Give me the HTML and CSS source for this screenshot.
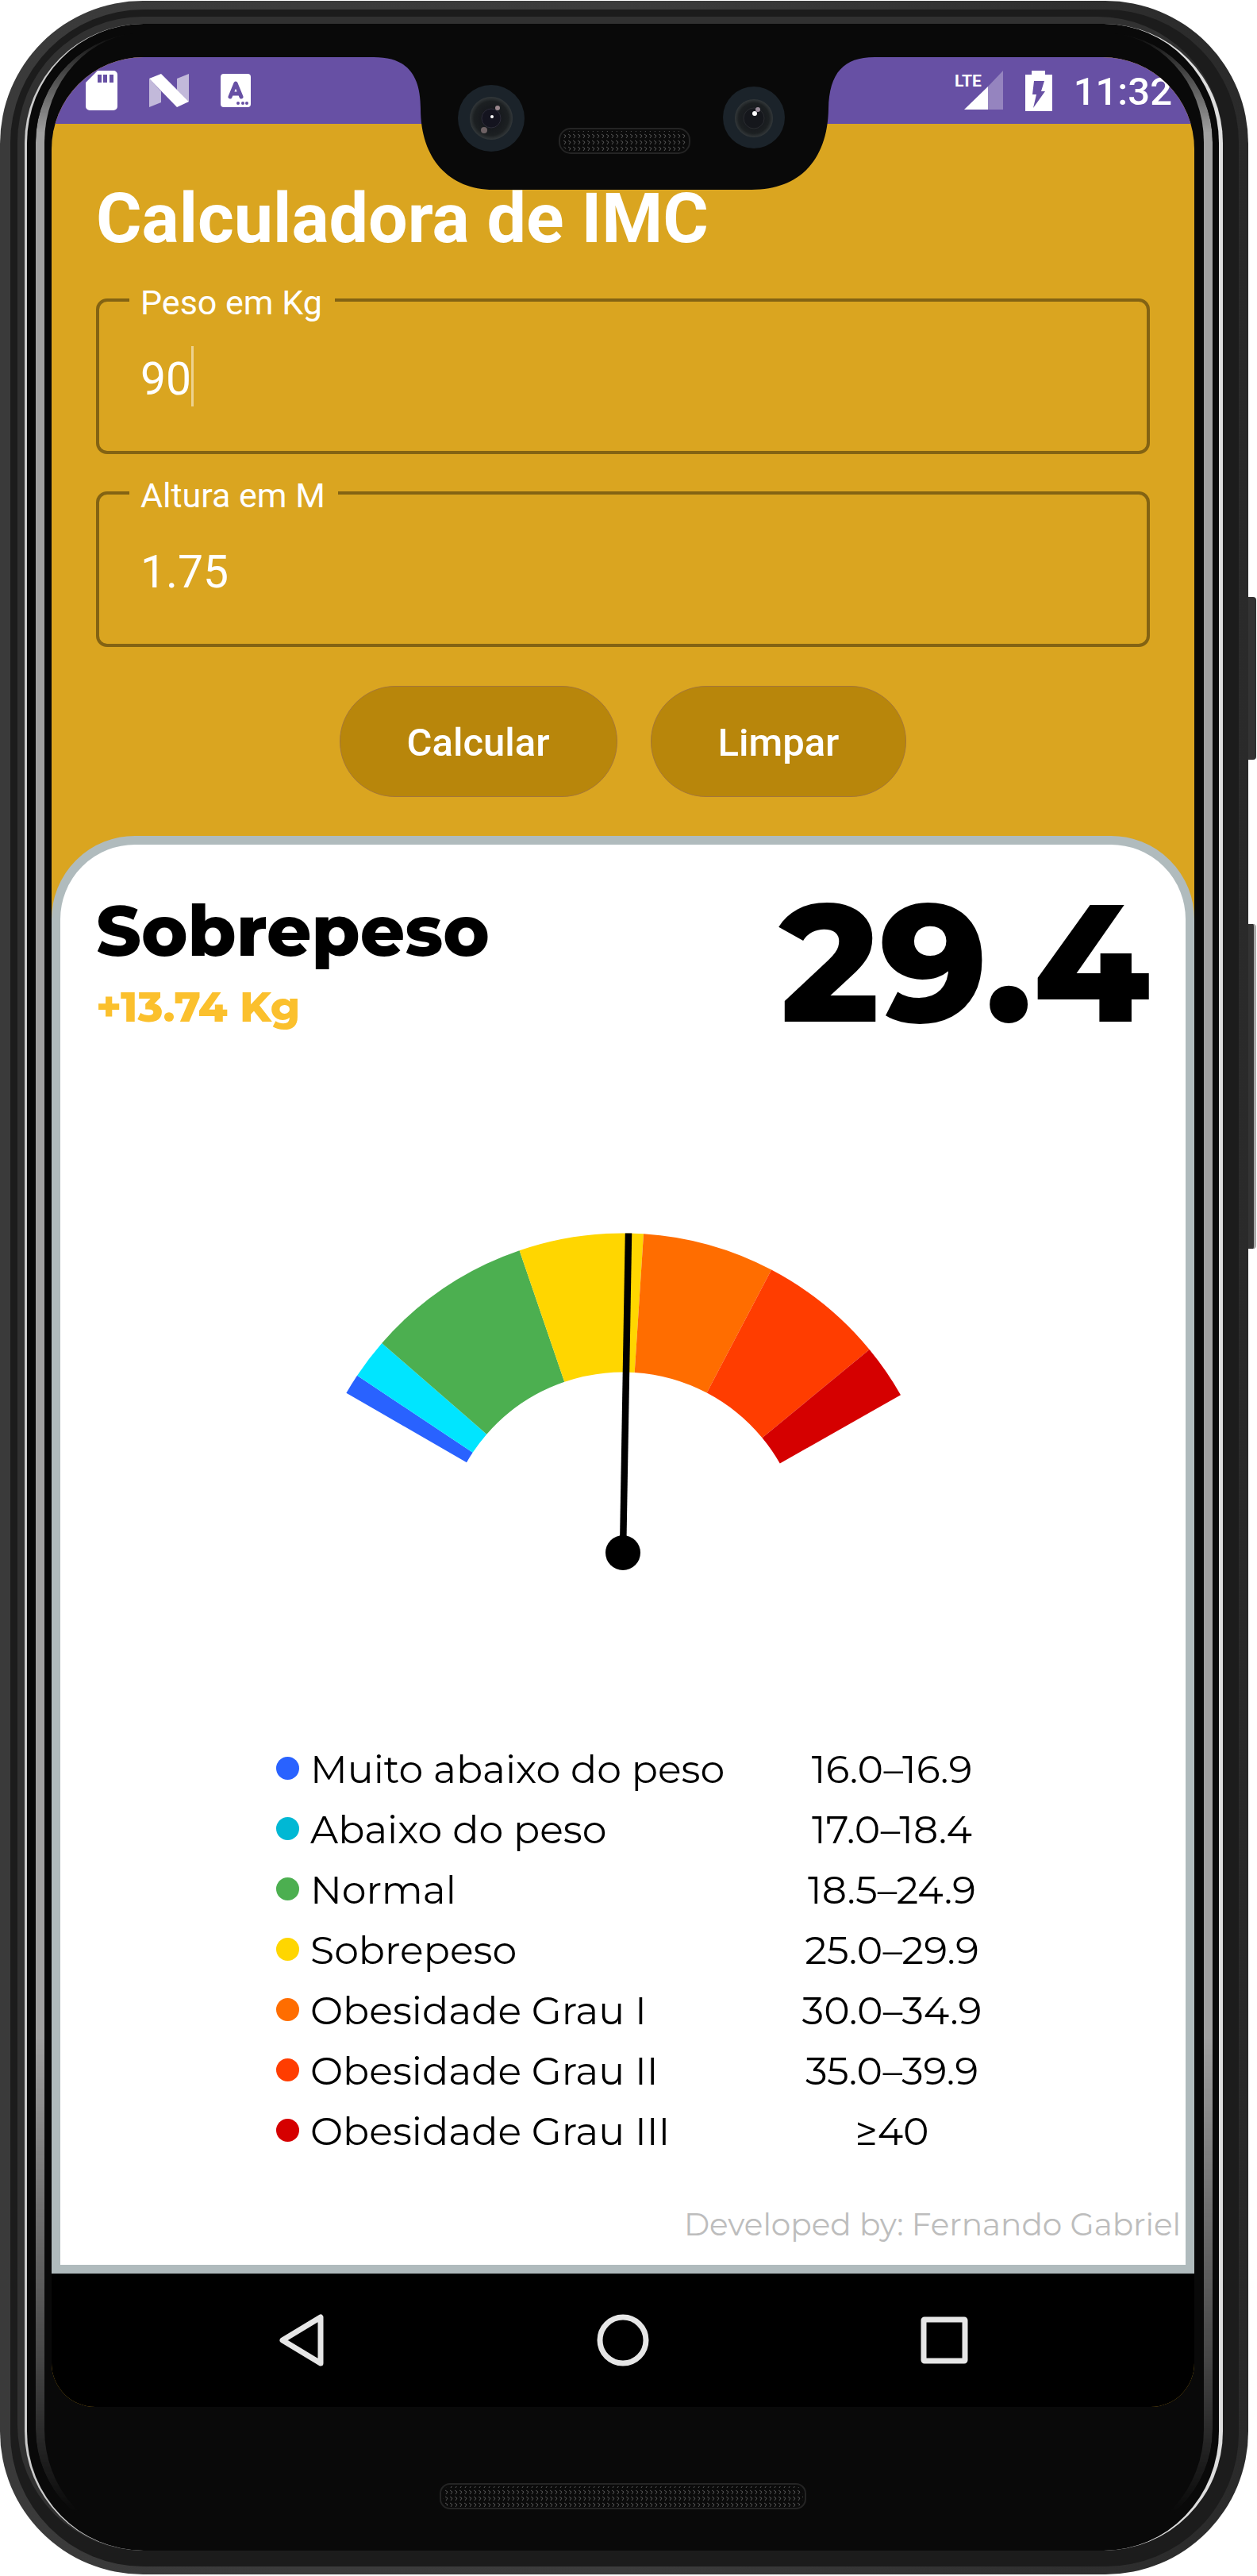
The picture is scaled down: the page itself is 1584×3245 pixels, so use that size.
FILE: index.html
```html
<!DOCTYPE html>
<html lang="pt-BR">
<head>
<meta charset="utf-8">
<meta name="viewport" content="width=device-width, initial-scale=1">
<title>Calculadora de IMC</title>
<link rel="stylesheet" href="styles.css">
</head>
<body>
<div class="stage">
  <div class="side-key side-key-power"></div>
  <div class="side-key side-key-volume"></div>
  <div class="phone">
    <div class="rim rim-dark"></div>
    <div class="rim rim-inner"></div>
    <div class="rim rim-glass"></div>
    <div class="rim rim-shine"></div>

    <div class="screen">
      <div class="status-bar">
        <div class="status-group status-left">
          <svg width="40" height="50" viewBox="0 0 40 50" aria-hidden="true">
            <path fill="#fff" fill-rule="evenodd" d="M15 0H35a5 5 0 0 1 5 5V45a5 5 0 0 1-5 5H5a5 5 0 0 1-5-5V15ZM15 5V15H20V5ZM22 5V15H27V5ZM30 5V15H35V5Z"/>
          </svg>
          <svg width="50" height="42" viewBox="0 0 50 42" aria-hidden="true">
            <path fill="#fff" opacity=".6" d="M0 6 15 22V36L0 42ZM35 6 50 0V35L35 20Z"/>
            <path fill="#fff" d="M0 6 15 0 50 35 35 42Z"/>
          </svg>
          <svg width="38" height="42" viewBox="0 0 38 42" aria-hidden="true">
            <rect width="38" height="42" rx="4" fill="#fff"/>
            <path d="M12 29 19 12 26 29M15 25H23" fill="none" stroke="#6750a4" stroke-width="5" stroke-linecap="round" stroke-linejoin="round"/>
            <g fill="#6750a4"><circle cx="22" cy="37" r="2"/><circle cx="28" cy="37" r="2"/><circle cx="33" cy="37" r="2"/></g>
          </svg>
        </div>
        <div class="status-group status-right">
          <svg width="62" height="50" viewBox="0 0 62 50" aria-label="LTE">
            <path fill="#fff" opacity=".3" d="M42 20 61 0V49H42Z"/>
            <path fill="#fff" d="M12 49 42 20V49Z"/>
            <text class="lte" x="0" y="20">LTE</text>
          </svg>
          <svg width="34" height="51" viewBox="0 0 34 51" aria-hidden="true">
            <path fill="#fff" d="M8 0H25V5H34V51H0V5H8Z"/>
            <path fill="#6750a4" d="M11 13H24L20 26H25L10 47 14 30H9Z"/>
          </svg>
          <span class="clock">11:32</span>
        </div>
      </div>

      <main class="app">
        <form class="form">
          <h1 class="title">Calculadora de IMC</h1>
          <fieldset class="field">
            <legend class="field-legend"><label for="peso">Peso em Kg</label></legend>
            <input class="field-input" id="peso" type="text" inputmode="decimal" value="90">
            <span class="caret"></span>
          </fieldset>
          <fieldset class="field">
            <legend class="field-legend"><label for="altura">Altura em M</label></legend>
            <input class="field-input" id="altura" type="text" inputmode="decimal" value="1.75">
          </fieldset>
          <div class="actions">
            <button class="btn" type="button">Calcular</button>
            <button class="btn" type="button">Limpar</button>
          </div>
        </form>

        <section class="card">
          <div class="result">
            <div class="result-text">
              <h2 class="result-name">Sobrepeso</h2>
              <p class="result-diff">+13.74 Kg</p>
            </div>
            <p class="result-value">29.4</p>
          </div>

          <svg class="gauge" width="704" height="426" viewBox="-352 -403 704 426" role="img" aria-label="IMC 29.4">
            <path fill="#2962ff" d="M-348.6-201.3A402.5 402.5 0 0 1-334.9-223.3L-189.3-126.2A227.5 227.5 0 0 0-197-113.8Z"/>
            <path fill="#00e5ff" d="M-334.9-223.3A402.5 402.5 0 0 1-303.8-264.1L-171.7-149.3A227.5 227.5 0 0 0-189.3-126.2Z"/>
            <path fill="#4caf50" d="M-303.8-264.1A402.5 402.5 0 0 1-130.4-380.8L-73.7-215.2A227.5 227.5 0 0 0-171.7-149.3Z"/>
            <path fill="#ffd600" d="M-130.4-380.8A402.5 402.5 0 0 1 26-401.7L14.7-227A227.5 227.5 0 0 0-73.7-215.2Z"/>
            <path fill="#ff6d00" d="M26-401.7A402.5 402.5 0 0 1 187.1-356.4L105.7-201.4A227.5 227.5 0 0 0 14.7-227Z"/>
            <path fill="#ff3d00" d="M187.1-356.4A402.5 402.5 0 0 1 310.6-256L175.5-144.7A227.5 227.5 0 0 0 105.7-201.4Z"/>
            <path fill="#d50000" d="M310.6-256A402.5 402.5 0 0 1 350-198.8L197.8-112.4A227.5 227.5 0 0 0 175.5-144.7Z"/>
            <path stroke="#000" stroke-width="8.5" d="M0 0 7-402.5"/>
            <circle r="22"/>
          </svg>

          <table class="ranges">
            <tbody>
              <tr><th scope="row"><span class="dot dot-very-low"></span>Muito abaixo do peso</th><td>16.0–16.9</td></tr>
              <tr><th scope="row"><span class="dot dot-low"></span>Abaixo do peso</th><td>17.0–18.4</td></tr>
              <tr><th scope="row"><span class="dot dot-normal"></span>Normal</th><td>18.5–24.9</td></tr>
              <tr><th scope="row"><span class="dot dot-over"></span>Sobrepeso</th><td>25.0–29.9</td></tr>
              <tr><th scope="row"><span class="dot dot-obese-1"></span>Obesidade Grau I</th><td>30.0–34.9</td></tr>
              <tr><th scope="row"><span class="dot dot-obese-2"></span>Obesidade Grau II</th><td>35.0–39.9</td></tr>
              <tr><th scope="row"><span class="dot dot-obese-3"></span>Obesidade Grau III</th><td>≥40</td></tr>
            </tbody>
          </table>

          <p class="credit">Developed by: Fernando Gabriel</p>
        </section>
      </main>

      <nav class="nav-bar">
        <button class="nav-btn" type="button" aria-label="Voltar">
          <svg width="66" height="66" viewBox="0 0 66 66"><path d="M57 4V62L9 33Z"/></svg>
        </button>
        <button class="nav-btn" type="button" aria-label="Início">
          <svg width="66" height="66" viewBox="0 0 66 66"><circle cx="33" cy="33" r="29"/></svg>
        </button>
        <button class="nav-btn" type="button" aria-label="Recentes">
          <svg width="66" height="66" viewBox="0 0 66 66"><rect x="7" y="7" width="52" height="52" rx="1"/></svg>
        </button>
      </nav>
    </div>

    <svg class="notch" width="632" height="170" viewBox="470 71 632 170" aria-hidden="true">
      <defs>
        <pattern id="mesh" width="6" height="8" patternUnits="userSpaceOnUse">
          <path d="M1 1 4 3 2 6" fill="none" stroke="#555" stroke-width="1"/>
        </pattern>
        <radialGradient id="lens">
          <stop offset="0" stop-color="#26264a"/><stop offset=".3" stop-color="#15171c"/>
          <stop offset=".8" stop-color="#1c2022"/><stop offset="1" stop-color="#33383a"/>
        </radialGradient>
      </defs>
      <path fill="#090909" d="M470 71V72C510 72 529 92 529 137C529 200 565 239 621 239H946C1008 239 1042 200 1043 137C1044 92 1062 72 1101 72V71Z"/>
      <circle cx="618" cy="149" r="42" fill="#1b232a"/>
      <circle cx="618" cy="149" r="27" fill="url(#lens)"/>
      <circle cx="618" cy="149" r="12" fill="#14141f" stroke="#2c2c38"/>
      <circle cx="619" cy="147" r="2" fill="#fff"/>
      <circle cx="626" cy="136" r="3" fill="#99868c"/>
      <circle cx="609" cy="164" r="4" fill="#6e6264"/>
      <circle cx="949" cy="148" r="39" fill="#1b232a"/>
      <circle cx="949" cy="149" r="24" fill="url(#lens)"/>
      <circle cx="949" cy="149" r="13" fill="#15171c" stroke="#2a2c30"/>
      <circle cx="950" cy="143" r="3" fill="#fff"/>
      <circle cx="954" cy="138" r="3" fill="#998c99"/>
      <rect x="704" y="162" width="164" height="31" rx="14" fill="#0b0b0b" stroke="#242424" stroke-width="2"/>
      <rect x="707" y="165" width="158" height="25" rx="12" fill="url(#mesh)"/>
    </svg>

    <div class="chin">
      <svg width="462" height="34" viewBox="0 0 462 34" aria-hidden="true">
        <rect x="1" y="1" width="460" height="31" rx="12" fill="#0b0b0b" stroke="#242424" stroke-width="2"/>
        <rect x="4" y="4" width="454" height="26" rx="10" fill="url(#mesh)"/>
      </svg>
    </div>
  </div>
</div>
</body>
</html>
```
FILE: styles.css
```css
* { box-sizing: border-box; }

body {
  margin: 0;
  background: #fff;
  font-family: Roboto, "Liberation Sans", sans-serif;
}

h1, h2, p { margin: 0; }

/* Phone body */
.stage {
  position: relative;
  padding: 1px 11px 2px 0;
}

.phone {
  position: relative;
  padding: 71px 68px 0 65px;
  border-radius: 180px;
  background: linear-gradient(90deg, #3a3a3a, #3c3c3c 50%, #2a2a2a);
}

.rim { position: absolute; }

.rim-dark {
  inset: 11px 12px 10px 13px;
  border-radius: 168px;
  background: #1c1c1c;
}

.rim-inner {
  inset: 20px 32px 30px 22px;
  border-radius: 158px;
  background: #313131;
}

.rim-glass {
  inset: 29px 32px 30px 31px;
  border: 0 solid #ccc;
  border-left-width: 3px;
  border-right: 5px solid #ddd;
  border-radius: 150px;
  background: #090909;
}

.rim-shine {
  inset: 40px 45px 45px 45px;
  border: 0 solid #a0a0a0;
  border-left-width: 11px;
  border-right-width: 11px;
  border-radius: 138px;
  mask-image: linear-gradient(transparent, #000 4%, #000 80%, rgba(0, 0, 0, .4) 93%, transparent 99%);
}

.side-key {
  position: absolute;
  right: 1px;
  width: 14px;
  border-radius: 4px;
  background: #333;
}

.side-key-power { top: 752px; height: 205px; }

.side-key-volume {
  top: 1164px;
  height: 409px;
  border-right: 3px solid #aaa;
}

/* Screen */
.screen {
  position: relative;
  overflow: hidden;
  border-radius: 116px 116px 55px 55px;
  background: #daa520;
}

.status-bar {
  display: flex;
  justify-content: space-between;
  height: 84px;
  padding: 0 28px 0 43px;
  background: #6750a4;
}

.status-group {
  display: flex;
  align-items: center;
}

.status-left { gap: 40px; }
.status-right { gap: 27px; }

.lte {
  fill: #fff;
  font: 700 21px "Liberation Sans Narrow", Roboto, sans-serif;
}

.clock {
  padding-top: 4px;
  color: #fff;
  font-size: 49px;
  font-weight: 500;
  line-height: 58px;
}

/* Form */
.form { padding: 67px 56px 49px; }

.title {
  margin-bottom: 22px;
  color: #fff;
  font-size: 88px;
  font-weight: 700;
  line-height: 104px;
}

.field {
  position: relative;
  min-width: 0;
  margin: 0 0 20px;
  padding: 0 52px;
  border: 4px solid #836313;
  border-radius: 14px;
}

.field-legend {
  margin-left: -14px;
  padding: 7px 16px 1px 14px;
  color: #fff;
  font-size: 43px;
  line-height: 50px;
}

.field-input {
  display: block;
  width: 100%;
  height: 161px;
  padding: 37px 0 58px;
  border: 0;
  outline: 0;
  background: none;
  color: #fff;
  font: 400 57px/66px Roboto, sans-serif;
}

.caret {
  position: absolute;
  bottom: 56px;
  left: 116px;
  width: 3px;
  height: 76px;
  background: rgba(255, 255, 255, .5);
}

.actions {
  display: flex;
  justify-content: center;
  gap: 42px;
  padding-top: 29px;
}

.btn {
  height: 140px;
  padding: 3px 84px 0;
  border: 1px solid #a4763a;
  border-radius: 70px;
  background: #b8860b;
  color: #fff;
  font: 500 49px/58px Roboto, sans-serif;
}

/* Result card */
.card {
  display: flex;
  flex-direction: column;
  padding: 48px 0 27px;
  border: 11px solid #b0bbbd;
  border-radius: 105px 105px 0 0;
  background: #fff;
  color: #000;
  font-family: Montserrat, Inter, sans-serif;
}

.result {
  display: flex;
  justify-content: space-between;
  padding: 0 45px;
}

.result-text { padding-top: 9px; }

.result-name {
  margin-bottom: 11px;
  font-size: 88px;
  font-weight: 800;
  line-height: 104px;
}

.result-diff {
  color: #fbc02d;
  font-size: 53px;
  font-weight: 800;
  line-height: 64px;
}

.result-value {
  font-size: 210px;
  font-weight: 800;
  line-height: 200px;
}

.gauge {
  align-self: center;
  margin: 241px 0 212px;
}

.ranges {
  width: 906px;
  margin-left: 272px;
  border-collapse: collapse;
  font-size: 49px;
  line-height: 76px;
}

.ranges th {
  padding: 0;
  font-weight: 400;
  text-align: left;
}

.ranges td {
  width: 260px;
  padding: 0;
  text-align: center;
}

.dot {
  display: inline-block;
  width: 29px;
  height: 29px;
  margin-right: 14px;
  border-radius: 50%;
  vertical-align: 4px;
}

.dot-very-low { background: #2962ff; }
.dot-low { background: #00b8d4; }
.dot-normal { background: #4caf50; }
.dot-over { background: #ffd600; }
.dot-obese-1 { background: #ff6d00; }
.dot-obese-2 { background: #ff3d00; }
.dot-obese-3 { background: #d50000; }

.credit {
  margin-top: 55px;
  padding-right: 6px;
  color: #bdbdbd;
  font-size: 39px;
  line-height: 48px;
  text-align: right;
}

/* System navigation */
.nav-bar {
  display: grid;
  grid-template-columns: repeat(3, 1fr);
  justify-items: center;
  align-items: center;
  height: 168px;
  padding: 0 112px;
  background: #000;
}

.nav-btn {
  padding: 0;
  border: 0;
  background: none;
}

.nav-btn svg {
  display: block;
  fill: none;
  stroke: #e6e6e6;
  stroke-width: 7px;
  stroke-linejoin: round;
}

/* Camera cutout, over the screen */
.notch {
  position: absolute;
  top: 70px;
  left: 50%;
  transform: translateX(-50%);
}

.chin {
  position: relative;
  display: flex;
  justify-content: center;
  height: 211px;
  padding-top: 96px;
}
```
